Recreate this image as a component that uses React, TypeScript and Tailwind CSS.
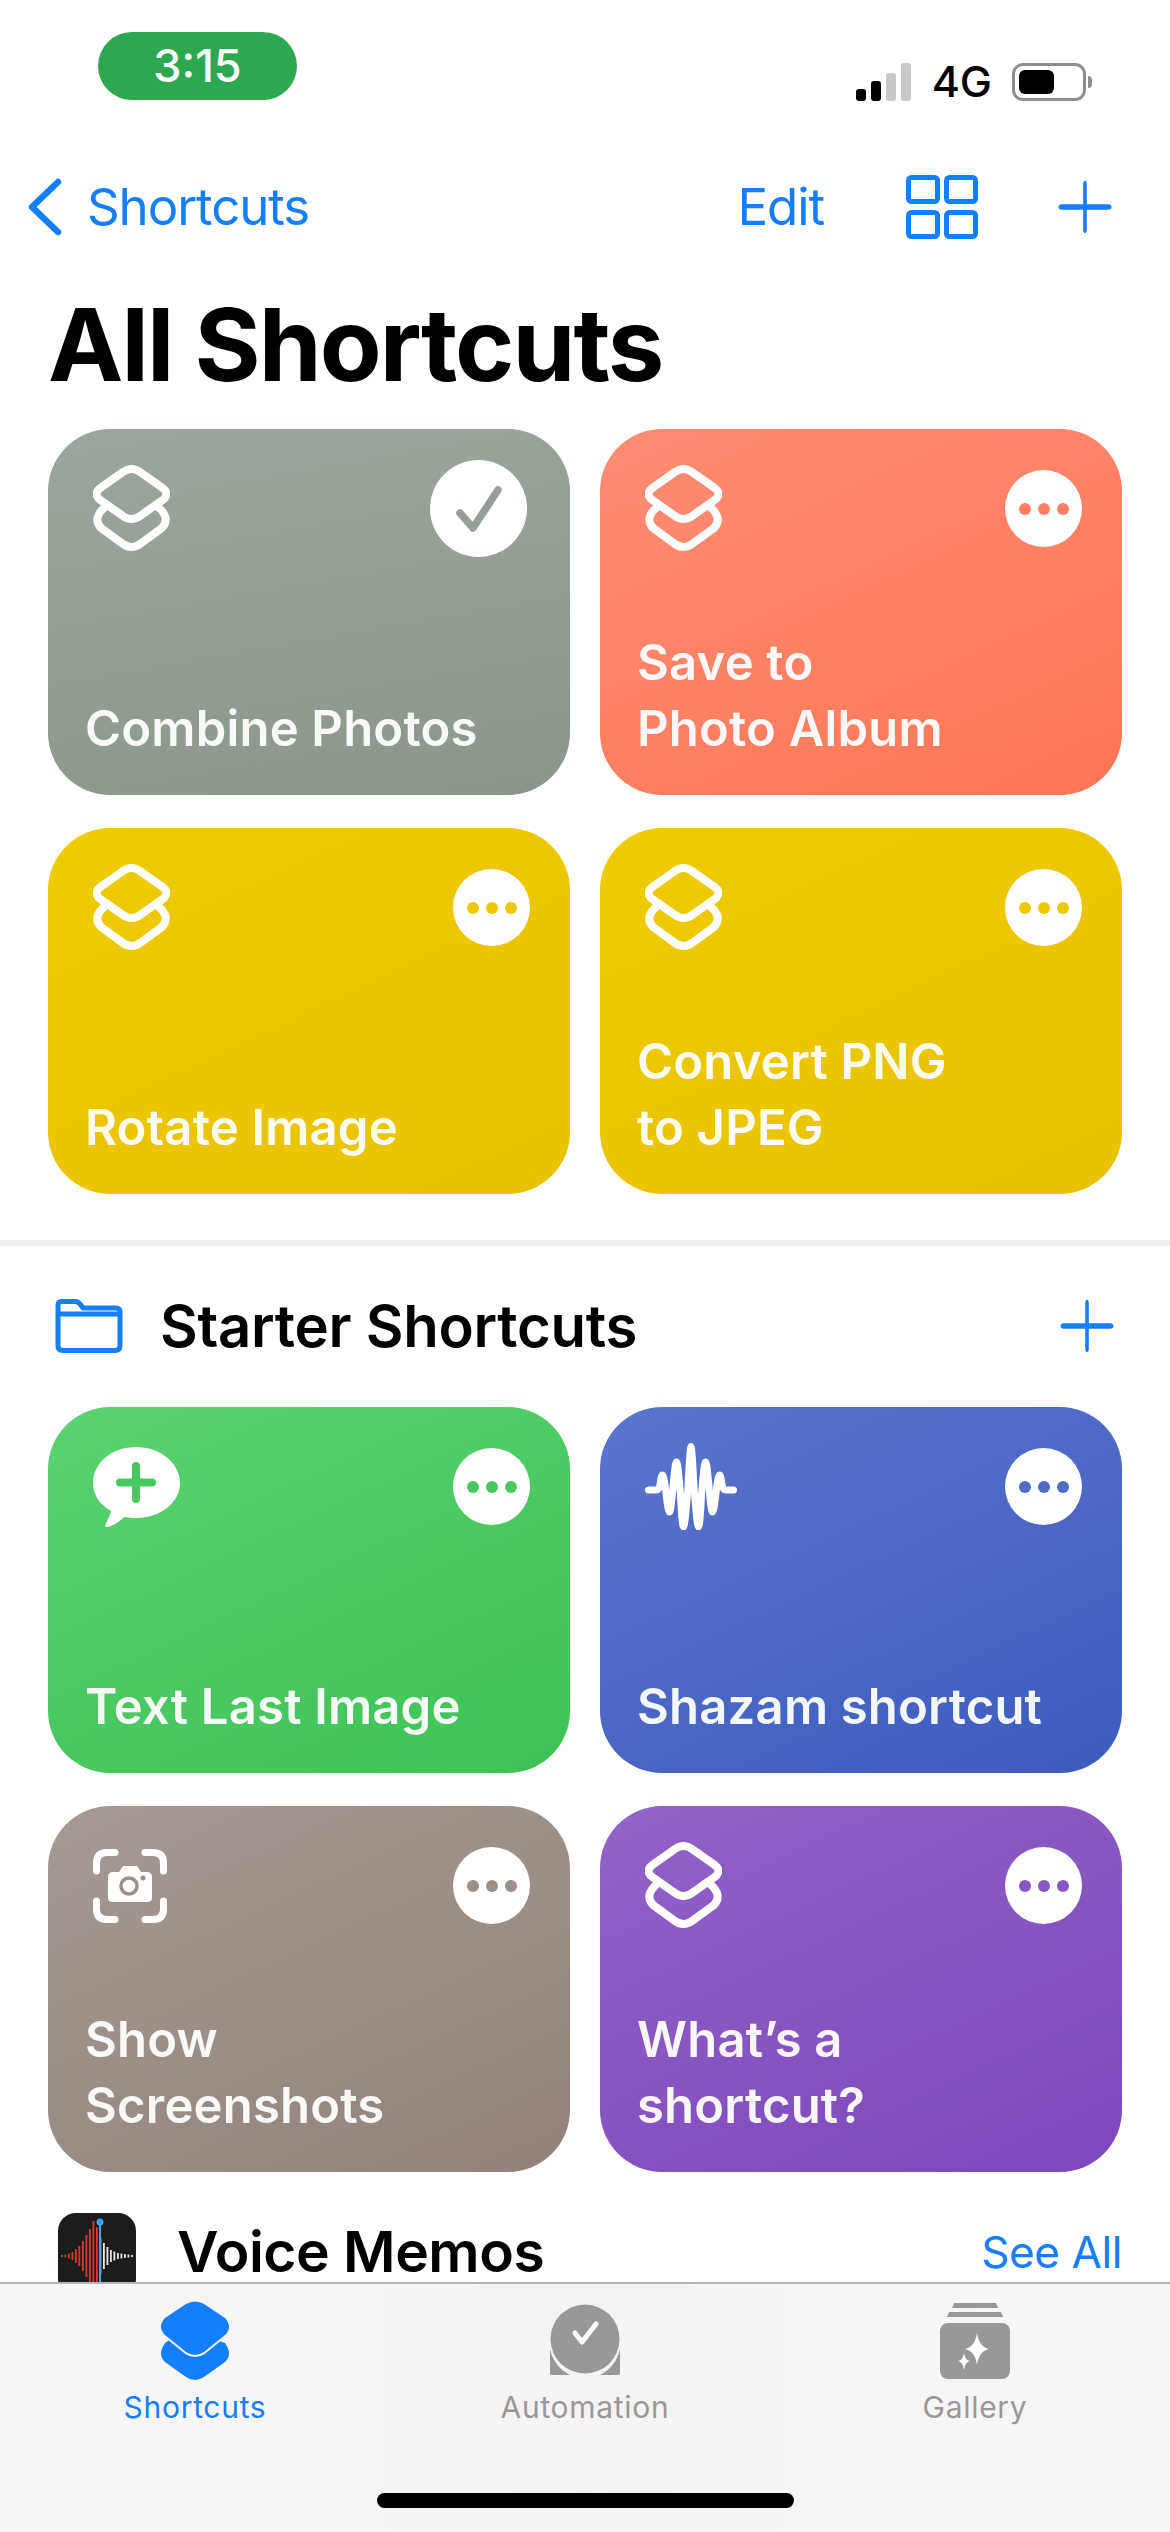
import type { ReactNode } from 'react'

function LayersIcon() {
  return (
    <svg width="77" height="87" viewBox="0 0 77 87" fill="none" stroke="white" strokeWidth="8" strokeLinecap="round">
      <path d="M30 7Q38.5 1 47 7L69 22.5Q78 29 69 35.5L47 51Q38.5 57 30 51L8 35.5Q-1 29 8 22.5Z" />
      <path d="M12 42Q-1 53 8 63L30 79Q38.5 85 47 79L69 63Q78 53 65 42" />
    </svg>
  )
}

function WaveIcon() {
  return (
    <svg width="92" height="87" viewBox="0 0 92 87" fill="none" stroke="white" strokeWidth="7" strokeLinecap="round" strokeLinejoin="round">
      <path d="M3.500 47H11Q14 47 15 42Q16 32 17.500 32Q19 32 21 50Q23 69 24.500 69Q26 69 28 44Q30 19 31.500 19Q33 19 35.500 52Q37 84 38.500 84Q40 84 43 44Q45 3.500 46 3.500Q47 3.500 49 44Q52 84 53.500 84Q55 84 56.500 52Q59 19 60.500 19Q62 19 64 44Q66 69 67.500 69Q69 69 71 50Q73 32 74.500 32Q76 32 77 42Q78 47 81 47H88.500" />
    </svg>
  )
}

function BubbleIcon({ color }: { color: string }) {
  return (
    <svg width="87" height="80" viewBox="0 0 87 80" fill="none">
      <path d="M43 0C67 0 87 16 87 36C87 56 67 71 43 71C38 71 34 70.500 31 70C26 76 15 81 13 80C10 79 17 71 18 64C7 58 0 48 0 36C0 16 19 0 43 0Z" fill="white" />
      <path d="M43 19V52M27 35.500H59" stroke={color} strokeWidth="8" strokeLinecap="round" />
    </svg>
  )
}

function ScreenshotIcon({ color }: { color: string }) {
  return (
    <svg width="74" height="74" viewBox="0 0 74 74" fill="none">
      <path d="M3.500 22V14Q3.500 3.500 14 3.500H22M52 3.500H60Q70.500 3.500 70.500 14V22M70.500 52V60Q70.500 70.500 60 70.500H52M22 70.500H14Q3.500 70.500 3.500 60V52" stroke="white" strokeWidth="7" strokeLinecap="round" />
      <path d="M20 23H26L30 17H44L48 23H54Q59 23 59 28V49Q59 53 54 53H20Q15 53 15 49V28Q15 23 20 23Z" fill="white" />
      <circle cx="36" cy="37" r="8" fill="none" stroke={color} strokeWidth="3.500" />
      <circle cx="50" cy="29" r="2.500" fill={color} />
    </svg>
  )
}

function BluePlus() {
  return (
    <svg width="54" height="54" viewBox="0 0 54 54" fill="none">
      <path d="M27 0.500Q28.800 1 28.800 4V24.200H50Q53.500 24.200 53.500 27Q53.500 29.800 50 29.800H28.800V50Q28.800 53 27 53.500Q25.200 53 25.200 50V29.800H4Q0.500 29.800 0.500 27Q0.500 24.200 4 24.200H25.200V4Q25.200 1 27 0.500Z" fill="#147EFB" />
    </svg>
  )
}

interface ShortcutCardProps {
  title: string[]
  icon: ReactNode
  accent: string
  gradient: string
  selected?: boolean
}

function ShortcutCard({ title, icon, accent, gradient, selected }: ShortcutCardProps) {
  return (
    <div className={`relative flex h-[366px] flex-col justify-between rounded-[62px] pb-[33px] pl-[37px] pr-[40px] text-white ${gradient}`}>
      <div className="flex items-start justify-between pt-[36px]">
        <div className="flex h-[87px] items-center justify-start pl-[8px]">{icon}</div>
        {selected ? (
          <div className="-mt-[5px] mr-[3px] flex h-[97px] w-[97px] items-center justify-center rounded-full bg-white">
            <svg width="48" height="48" viewBox="0 0 48 48" fill="none" stroke={accent} strokeWidth="7.500" strokeLinecap="round" strokeLinejoin="round">
              <path d="M5 28L18 43L43 5" />
            </svg>
          </div>
        ) : (
          <div className="mt-[5px] flex h-[77px] w-[77px] items-center justify-center gap-[7px] rounded-full bg-white">
            <span className="h-[12px] w-[12px] rounded-full" style={{ backgroundColor: accent }} />
            <span className="h-[12px] w-[12px] rounded-full" style={{ backgroundColor: accent }} />
            <span className="h-[12px] w-[12px] rounded-full" style={{ backgroundColor: accent }} />
          </div>
        )}
      </div>
      <div className="text-[49px] font-semibold leading-[66px] tracking-[0.2px] opacity-95">
        {title.map((line) => (
          <div key={line}>{line}</div>
        ))}
      </div>
    </div>
  )
}

const memoBars = [2, 3, 5, 8, 14, 20, 30, 42, 54, 70, 58, 36, 26, 18, 12, 9, 6, 5, 4, 3, 2]

function VoiceMemosIcon() {
  return (
    <div className="h-[84px] w-[78px] shrink-0 rounded-[18px] bg-[#1c1c1e]">
      <svg width="78" height="84" viewBox="0 0 78 84">
        {memoBars.map((h, i) => (
          <rect key={i} x={3 + i * 3.500} y={43 - h / 2} width="1.800" height={h} fill={i < 11 ? '#d8392f' : '#e8e8e8'} />
        ))}
        <rect x="41" y="8" width="2" height="76" fill="#3ba7e8" />
        <circle cx="42" cy="9" r="3.500" fill="#3ba7e8" />
      </svg>
    </div>
  )
}

export default function App() {
  return (
    <div className="relative h-[2532px] w-[1170px] overflow-hidden bg-white font-['Inter',sans-serif] text-black">
      {/* status bar */}
      <div className="flex h-[100px] items-start justify-between pl-[98px] pr-[78px] pt-[32px]">
        <div className="flex h-[68px] w-[199px] items-center justify-center rounded-[34px] bg-[#2ea84f] text-[45px] font-medium text-white">
          3:15
        </div>
        <div className="flex items-center pt-[28px]">
          <svg width="56" height="38" viewBox="0 0 56 38">
            <rect x="0" y="26" width="10" height="12" rx="3" fill="black" />
            <rect x="15" y="18" width="10" height="20" rx="3" fill="black" />
            <rect x="30" y="10" width="10" height="28" rx="3" fill="#c8c8c8" />
            <rect x="45" y="0" width="10" height="38" rx="3" fill="#c8c8c8" />
          </svg>
          <span className="ml-[20px] text-[43px] font-medium leading-none">4G</span>
          <div className="ml-[20px] flex items-center">
            <div className="h-[38px] w-[74px] rounded-[11px] border-[3px] border-[#8e8e8e] p-[4px]">
              <div className="h-full w-[35px] rounded-[6px] bg-black" />
            </div>
            <div className="ml-[2px] h-[12px] w-[4px] rounded-r-full bg-[#8e8e8e]" />
          </div>
        </div>
      </div>

      {/* nav bar */}
      <div className="mt-[75px] flex h-[64px] items-center justify-between pl-[28px] pr-[58px] text-[51px] tracking-[-1.1px] text-[#147EFB]">
        <div className="flex items-center">
          <svg width="34" height="58" viewBox="0 0 34 58" fill="none" stroke="#147EFB" strokeWidth="6.500" strokeLinecap="round" strokeLinejoin="round">
            <path d="M30 4L4 29L30 54" />
          </svg>
          <span className="ml-[25px]">Shortcuts</span>
        </div>
        <div className="flex items-center">
          <span>Edit</span>
          <svg className="ml-[82px]" width="72" height="64" viewBox="0 0 72 64" fill="none" stroke="#147EFB" strokeWidth="5">
            <rect x="2.500" y="2.500" width="29" height="24" rx="3" />
            <rect x="40.500" y="2.500" width="29" height="24" rx="3" />
            <rect x="2.500" y="37.500" width="29" height="24" rx="3" />
            <rect x="40.500" y="37.500" width="29" height="24" rx="3" />
          </svg>
          <div className="ml-[80px]">
            <BluePlus />
          </div>
        </div>
      </div>

      <h1 className="mt-[50px] pl-[48px] text-[101px] font-bold leading-[110px] tracking-[-1.9px]">All Shortcuts</h1>

      <div className="mt-[30px] grid grid-cols-2 gap-x-[30px] gap-y-[33px] px-[48px]">
        <ShortcutCard title={['Combine Photos']} icon={<LayersIcon />} accent="#94a095" gradient="bg-linear-170 from-[#9ba69c] to-[#8c978c]" selected />
        <ShortcutCard title={['Save to', 'Photo Album']} icon={<LayersIcon />} accent="#ff7f66" gradient="bg-linear-155 from-[#ff8d74] to-[#ff7555]" />
        <ShortcutCard title={['Rotate Image']} icon={<LayersIcon />} accent="#ecc800" gradient="bg-linear-155 from-[#efcb00] to-[#e9c300]" />
        <ShortcutCard title={['Convert PNG', 'to JPEG']} icon={<LayersIcon />} accent="#ecc800" gradient="bg-linear-155 from-[#efcb00] to-[#e9c300]" />
      </div>

      <div className="mt-[46px] h-[6px] bg-[#f1f1f4]" />

      <div className="mt-[48px] flex h-[64px] items-center pl-[55px] pr-[56px]">
        <svg width="68" height="54" viewBox="0 0 68 54" fill="none" stroke="#147EFB" strokeWidth="5" strokeLinejoin="round">
          <path d="M3 12V6Q3 2.500 7 2.500H20Q23 2.500 25 5L28 9H61Q65 9 65 13V47Q65 51.500 60 51.500H8Q3 51.500 3 47Z" />
          <path d="M3 15H65" />
        </svg>
        <span className="ml-[37px] flex-1 text-[58px] font-semibold tracking-[-0.25px]">Starter Shortcuts</span>
        <BluePlus />
      </div>

      <div className="mt-[49px] grid grid-cols-2 gap-x-[30px] gap-y-[33px] px-[48px]">
        <ShortcutCard title={['Text Last Image']} icon={<BubbleIcon color="#48c95f" />} accent="#48c95f" gradient="bg-linear-155 from-[#5bd270] to-[#3cc254]" />
        <ShortcutCard title={['Shazam shortcut']} icon={<WaveIcon />} accent="#4f6cc6" gradient="bg-linear-155 from-[#5a75cc] to-[#3c5bbc]" />
        <ShortcutCard title={['Show', 'Screenshots']} icon={<ScreenshotIcon color="#9b8f88" />} accent="#9b8f88" gradient="bg-linear-155 from-[#a59b94] to-[#90827a]" />
        <ShortcutCard title={["What\u2019s a", 'shortcut?']} icon={<LayersIcon />} accent="#8657c2" gradient="bg-linear-155 from-[#9164c8] to-[#7b47ba]" />
      </div>

      <div className="mt-[41px] flex items-start pl-[58px] pr-[48px]">
        <VoiceMemosIcon />
        <span className="ml-[41px] flex-1 pt-[4px] text-[57px] font-semibold leading-[70px] tracking-[-0.5px]">Voice Memos</span>
        <span className="pt-[7px] text-[44px] leading-[64px] tracking-[-0.4px] text-[#147EFB]">See All</span>
      </div>

      {/* tab bar */}
      <div className="absolute inset-x-0 bottom-0 h-[250px] border-t-2 border-[#b4b4b4] bg-gradient-to-r from-[#f8f7f7] via-[#f5f3f3] to-[#f8f7f7]">
        <div className="grid grid-cols-3 pt-[16px] text-[30px] leading-[36px] tracking-[0.7px]">
          <div className="flex flex-col items-center text-[#147EFB]">
            <svg className="h-[82px]" width="72" height="80" viewBox="0 0 72 80">
              <path d="M26 28L66 42Q74 53 66 61L45 76Q36 82 27 76L6 61Q-2 53 6 42Z" fill="#147EFB" />
              <path d="M27 3Q36 -2 45 3L66 17Q74 26 66 34L45 51Q36 57 27 51L6 34Q-2 26 6 17Z" fill="#147EFB" stroke="#f5f3f3" strokeWidth="4" paintOrder="stroke" />
            </svg>
            <span className="mt-[7px]">Shortcuts</span>
          </div>
          <div className="flex flex-col items-center text-[#9a9897]">
            <svg className="h-[82px]" width="70" height="72" viewBox="0 0 70 72">
              <path d="M0 44C3 58 12 66 20 70H2Q0 70 0 68ZM70 44C67 58 58 66 50 70H68Q70 70 70 68Z" fill="#9a9897" />
              <circle cx="35" cy="34" r="34.500" fill="#9a9897" />
              <path d="M25 28L32 37L46 19" fill="none" stroke="white" strokeWidth="5" strokeLinecap="round" strokeLinejoin="round" />
            </svg>
            <span className="mt-[7px]">Automation</span>
          </div>
          <div className="flex flex-col items-center text-[#9a9897]">
            <svg className="h-[82px]" width="70" height="76" viewBox="0 0 70 76">
              <path d="M14 0H56L58 5H12Z" fill="#9a9897" />
              <path d="M9 9H61L63 14H7Z" fill="#9a9897" />
              <rect x="0" y="20" width="70" height="56" rx="8" fill="#9a9897" />
              <path d="M37 30Q39 44 49 46Q39 48 37 62Q35 48 25 46Q35 44 37 30Z" fill="white" />
              <path d="M24 50Q25 57 30 58Q25 59 24 67Q23 59 18 58Q23 57 24 50Z" fill="white" />
            </svg>
            <span className="mt-[7px]">Gallery</span>
          </div>
        </div>
        <div className="absolute bottom-[24px] left-[377px] h-[15px] w-[417px] rounded-full bg-black" />
      </div>
    </div>
  )
}
